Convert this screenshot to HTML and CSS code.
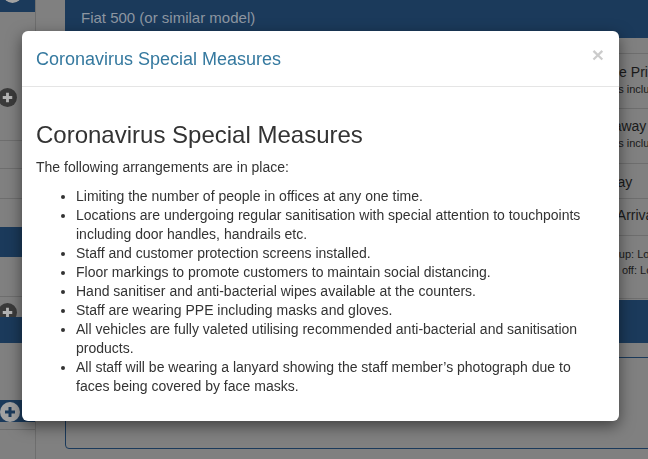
FILE: index.html
```html
<!DOCTYPE html>
<html lang="en">
<head>
<meta charset="utf-8">
<title>Coronavirus Special Measures</title>
<link rel="stylesheet" href="styles.css">
</head>
<body>
<div class="page">
  <aside class="sidebar">
    <div class="s-row nav h12"><span class="icon light top"><svg viewBox="0 0 20 20"><path d="M10 5v10M5 10h10"/></svg></span></div>
    <div class="s-row h128 line"><span class="icon dark first"><svg viewBox="0 0 20 20"><path d="M10 5v10M5 10h10"/></svg></span></div>
    <div class="s-row h27 line"></div>
    <div class="s-row h29 line"></div>
    <div class="s-row h28"></div>
    <div class="s-row nav h30"></div>
    <div class="s-row h39 line"></div>
    <div class="s-row h20"><span class="icon dark second"><svg viewBox="0 0 20 20"><path d="M10 5v10M5 10h10"/></svg></span></div>
    <div class="s-row nav h26"></div>
    <div class="s-row h57"></div>
    <div class="s-row nav h22"><span class="icon light third"><svg viewBox="0 0 20 20"><path d="M10 5v10M5 10h10"/></svg></span></div>
    <div class="s-row h8 line"></div>
    <div class="s-row grow"></div>
  </aside>

  <main class="main">
    <div class="vehicle-bar">Fiat 500 (or similar model)</div>
    <div class="details">
      <div class="details-left"></div>
      <div class="prices">
        <div class="p-row r1"><div class="p-big">Base Price</div><div class="p-small">Taxes included</div></div>
        <div class="p-row r2"><div class="p-big">Flyaway Price</div><div class="p-small">Taxes included</div></div>
        <div class="p-row r3"><div class="p-big">Today</div></div>
        <div class="p-row r4"><div class="p-big">On Arrival</div></div>
        <div class="p-row r5"><div class="p-small">Pick up: Location</div><div class="p-small">Drop off: Location</div></div>
      </div>
    </div>
    <div class="nav-band"></div>
    <div class="extras-box"></div>
  </main>
</div>

<div class="modal" role="dialog">
  <div class="modal-header">
    <button class="close" type="button" aria-label="Close">×</button>
    <h4 class="modal-title">Coronavirus Special Measures</h4>
  </div>
  <div class="modal-body">
    <h3 class="body-title">Coronavirus Special Measures</h3>
    <p class="intro">The following arrangements are in place:</p>
    <ul class="measures">
      <li>Limiting the number of people in offices at any one time.</li>
      <li>Locations are undergoing regular sanitisation with special attention to touchpoints including door handles, handrails etc.</li>
      <li>Staff and customer protection screens installed.</li>
      <li>Floor markings to promote customers to maintain social distancing.</li>
      <li>Hand sanitiser and anti-bacterial wipes available at the counters.</li>
      <li>Staff are wearing PPE including masks and gloves.</li>
      <li>All vehicles are fully valeted utilising recommended anti-bacterial and sanitisation products.</li>
      <li>All staff will be wearing a lanyard showing the staff member’s photograph due to faces being covered by face masks.</li>
    </ul>
  </div>
</div>
</body>
</html>
```

FILE: styles.css
```css
* { box-sizing: border-box; }

html, body {
  margin: 0;
  padding: 0;
}

body {
  width: 648px;
  height: 459px;
  overflow: hidden;
  background: #808080;
  font-family: "Liberation Sans", Arial, sans-serif;
  color: #333;
}

.page {
  display: flex;
  height: 459px;
}

/* ---- dimmed background page ---- */
.sidebar {
  width: 36px;
  flex: 0 0 36px;
  border-right: 1px solid #6e6e6e;
  display: flex;
  flex-direction: column;
}

.s-row { flex: 0 0 auto; }
.s-row.nav { background: #1b3a5b; }
.s-row.line { border-bottom: 1px solid #6e6e6e; }
.h8 { height: 8px; }
.h12 { height: 12px; }
.h20 { height: 20px; }
.h22 { height: 22px; }
.h26 { height: 26px; }
.h27 { height: 28px; }
.h28 { height: 28px; }
.h29 { height: 30px; }
.h30 { height: 30px; }
.h39 { height: 40px; }
.h57 { height: 57px; }
.h128 { height: 129px; }
.s-row.grow { flex: 1 1 auto; }

.icon {
  display: block;
  width: 19px;
  height: 19px;
  border-radius: 50%;
}
.icon svg { display: block; width: 100%; height: 100%; }
.icon path { fill: none; stroke-width: 3; }
.icon.dark { background: #3b3b3b; }
.icon.dark path { stroke: #b4b4b4; }
.icon.light { background: #a2a2a2; }
.icon.light path { stroke: #1b3a5b; }

.icon.top { margin: -16px 0 0 3px; }
.icon.first { margin: 76px 0 0 -2px; }
.icon.second { margin: 6px 0 0 -2px; }
.icon.third { margin: 2px 0 0 0; width: 20px; height: 20px; }

.main {
  margin-left: 29px;
  flex: 0 0 600px;
  width: 600px;
  min-width: 0;
  display: flex;
  flex-direction: column;
}

.vehicle-bar {
  height: 38px;
  background: #1b3a5b;
  color: #8d96a1;
  font-size: 15px;
  line-height: 36px;
  padding-left: 16px;
}

.details {
  margin-top: 15px;
  display: flex;
}
.details-left { flex: 1 1 auto; min-width: 0; }

.prices {
  flex: 0 0 84px;
  width: 84px;
  border-top: 1px solid #6e6e6e;
  color: #1a1a1a;
}

.p-row {
  border-bottom: 1px solid #6e6e6e;
  padding-left: 14px;
  white-space: nowrap;
  overflow: hidden;
}
.r1 { height: 55px; padding-top: 10px; }
.r2 { height: 55px; padding-top: 9px; }
.r3 { height: 35px; padding-top: 10px; }
.r4 { height: 37px; padding-top: 8px; }
.r5 { height: 63px; padding-top: 10px; }

.p-big { font-size: 14px; line-height: 17px; }
.p-small { font-size: 11px; line-height: 16px; }

.nav-band {
  margin-top: 1px;
  height: 43px;
  background: #1b3a5b;
}

.extras-box {
  margin-top: 14px;
  height: 92px;
  border: 1px solid #1b3a5b;
  border-radius: 4px;
}

/* ---- modal (overlays the page) ---- */
.modal {
  position: fixed;
  top: 31px;
  left: 22px;
  width: 597px;
  background: #fff;
  border-radius: 6px;
  box-shadow: 0 5px 15px rgba(0, 0, 0, 0.5);
}

.modal-header {
  padding: 15px 15px 14px 14px;
  border-bottom: 1px solid #e5e5e5;
}

.modal-title {
  margin: 0;
  font-size: 18px;
  font-weight: normal;
  line-height: 26px;
  color: #35799f;
}

.close {
  float: right;
  margin-top: -2px;
  padding: 0;
  border: 0;
  background: transparent;
  font-family: "Liberation Sans", Arial, sans-serif;
  font-size: 21px;
  font-weight: bold;
  line-height: 1;
  color: #000;
  opacity: 0.2;
  cursor: pointer;
}

.modal-body {
  padding: 15px 15px 15px 14px;
  font-size: 14px;
  line-height: 19px;
}

.body-title {
  margin: 20px 0 10px;
  font-size: 24px;
  font-weight: normal;
  line-height: 1.1;
  color: #333;
}

.intro {
  margin: 0 0 10px;
}

.measures {
  margin: 0 0 10px;
  padding-left: 40px;
}
```
